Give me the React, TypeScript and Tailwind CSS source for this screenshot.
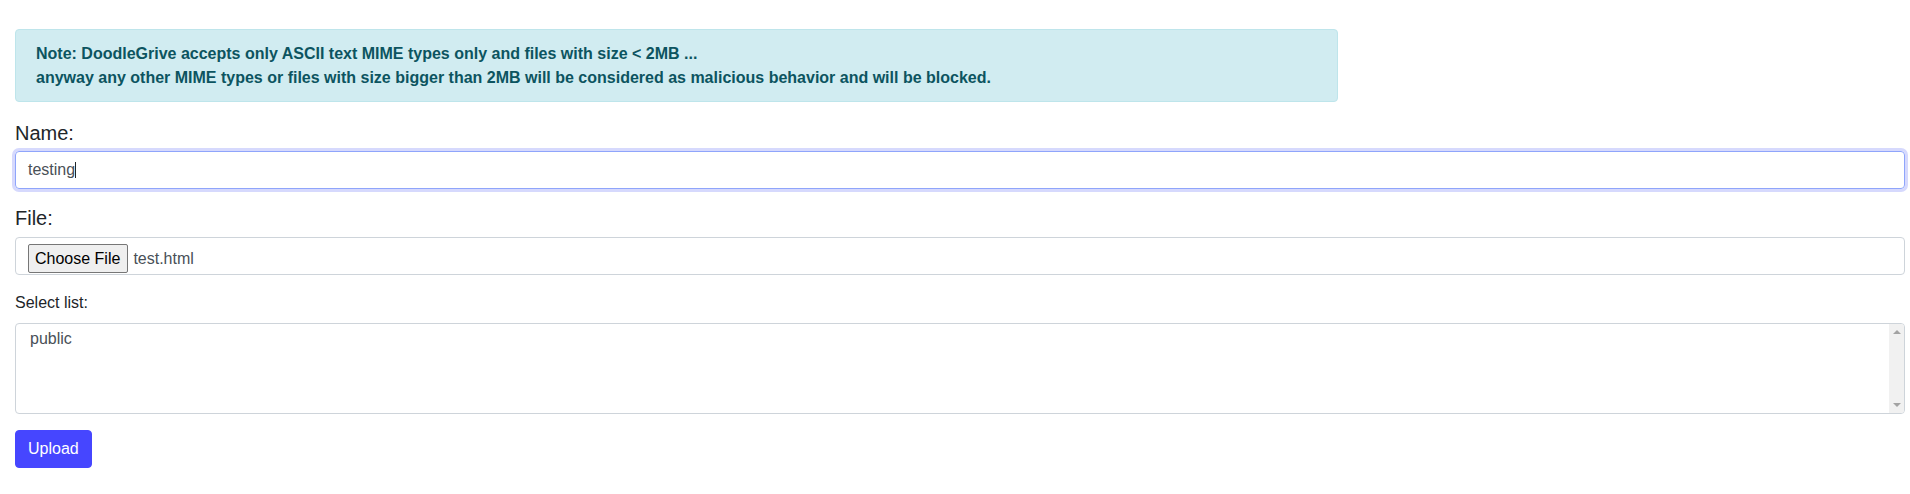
export default function App() {
  return (
    <div className="min-h-screen bg-white pt-[29px] pl-[15px] pr-[5px] font-['Liberation_Sans',Arial,sans-serif] text-[#212529]">
      <div className="w-[1323px] rounded border border-[#bee5eb] bg-[#d1ecf1] px-5 pt-3 pb-[11px] text-base font-bold leading-6 text-[#0c5460]">
        <p>Note: DoodleGrive accepts only ASCII text MIME types only and files with size &lt; 2MB ...</p>
        <p>anyway any other MIME types or files with size bigger than 2MB will be considered as malicious behavior and will be blocked.</p>
      </div>

      <form className="mt-4" onSubmit={(e) => e.preventDefault()}>
        <label className="mb-[3px] block text-xl leading-[30px]">Name:</label>
        <div className="flex h-[38px] items-center rounded border border-[#8fa5fb] px-3 text-base text-[#495057] shadow-[0_0_0_3px_#d6d9fd]">
          testing
          <span className="h-[16px] w-px bg-[#212529]" />
        </div>

        <label className="mt-[14px] mb-[4px] block text-xl leading-[30px]">File:</label>
        <div className="flex h-[38px] items-start rounded border border-[#ced4da] px-3 pt-[6px] text-base">
          <button
            type="button"
            className="h-[29px] rounded-[2px] border border-[#767676] bg-[#efefef] pl-[6px] pr-[7px] text-base text-black"
          >
            Choose File
          </button>
          <span className="ml-[5px] flex h-[29px] items-center text-[#495057]">test.html</span>
        </div>

        <label className="mt-4 mb-2 block text-base leading-6">Select list:</label>
        <div className="flex h-[91px] overflow-hidden rounded border border-[#ced4da] text-base">
          <div className="flex-1 pl-[14px] pt-[6px] leading-[18px] text-[#495057]">public</div>
          <div className="flex w-[15px] flex-col items-center justify-between bg-[#f1f1f1] py-[6px]">
            <span className="h-0 w-0 border-x-[4px] border-b-[4px] border-x-transparent border-b-[#a3a3a3]" />
            <span className="h-0 w-0 border-x-[4px] border-t-[4px] border-x-transparent border-t-[#a3a3a3]" />
          </div>
        </div>

        <button
          type="submit"
          className="mt-4 h-[38px] rounded border border-[#4646ff] bg-[#4646ff] px-3 text-base text-white"
        >
          Upload
        </button>
      </form>
    </div>
  );
}
